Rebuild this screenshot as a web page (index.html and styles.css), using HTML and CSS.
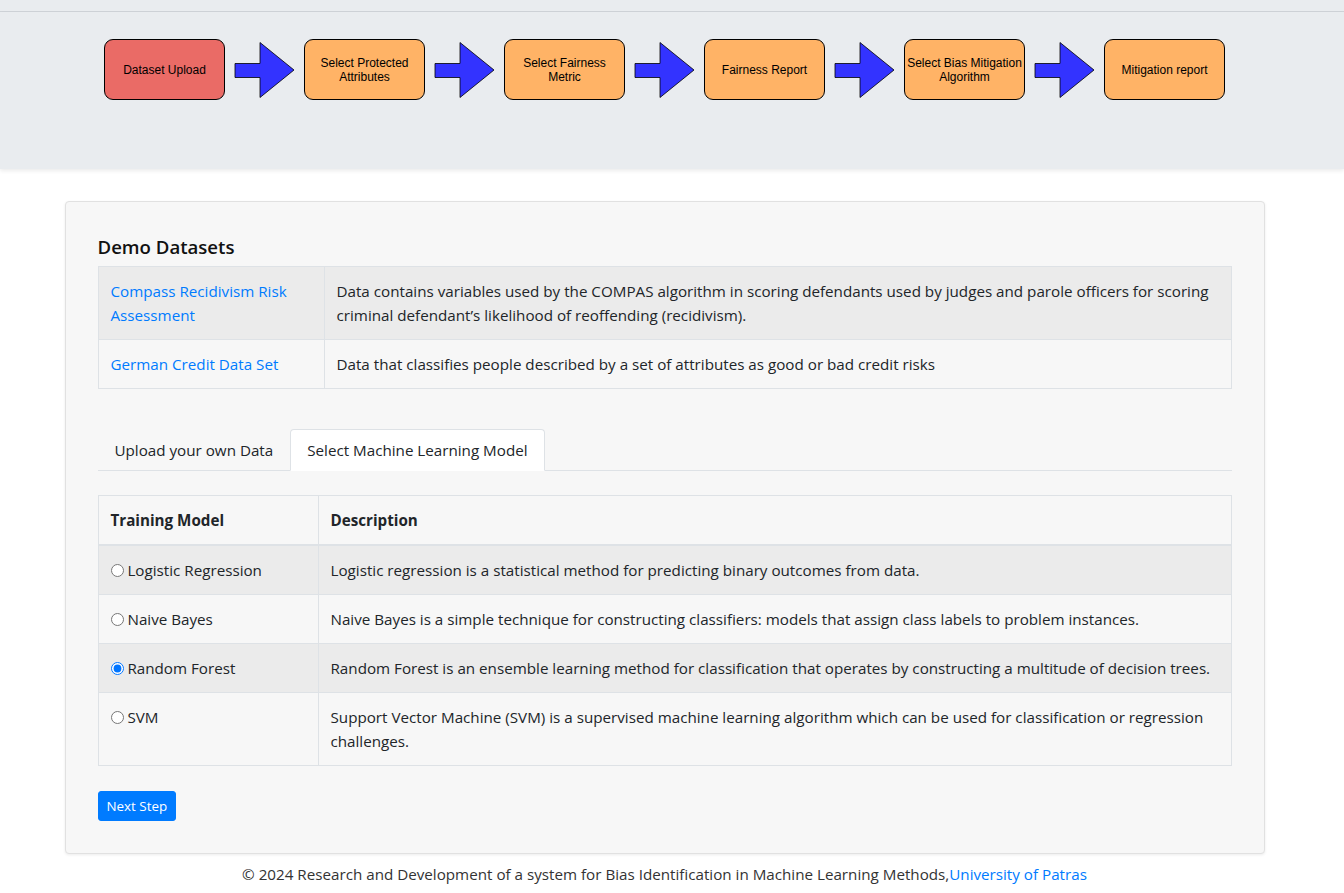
FILE: index.html
```html
<!DOCTYPE html>
<html lang="en">
<head>
<meta charset="utf-8">
<title>Bias Identification</title>
<link rel="stylesheet" href="styles.css">
</head>
<body>
<div class="topbar"></div>
<section class="flow-band">
  <div class="flow">
    <div class="step step-active">Dataset Upload</div>
    <svg class="arrow" width="62" height="58" viewBox="0 0 62 58"><path d="M1 22.5 H26 V1.5 L60 29 L26 56.5 V36.5 H1 Z"/></svg>
    <div class="step">Select Protected Attributes</div>
    <svg class="arrow" width="62" height="58" viewBox="0 0 62 58"><path d="M1 22.5 H26 V1.5 L60 29 L26 56.5 V36.5 H1 Z"/></svg>
    <div class="step">Select Fairness Metric</div>
    <svg class="arrow" width="62" height="58" viewBox="0 0 62 58"><path d="M1 22.5 H26 V1.5 L60 29 L26 56.5 V36.5 H1 Z"/></svg>
    <div class="step">Fairness Report</div>
    <svg class="arrow" width="62" height="58" viewBox="0 0 62 58"><path d="M1 22.5 H26 V1.5 L60 29 L26 56.5 V36.5 H1 Z"/></svg>
    <div class="step">Select Bias Mitigation Algorithm</div>
    <svg class="arrow" width="62" height="58" viewBox="0 0 62 58"><path d="M1 22.5 H26 V1.5 L60 29 L26 56.5 V36.5 H1 Z"/></svg>
    <div class="step">Mitigation report</div>
  </div>
</section>

<div class="page">
<main class="card">
  <h5 class="card-title">Demo Datasets</h5>
  <table class="tbl tbl-demo">
    <tr class="striped">
      <td class="c1"><a href="#">Compass Recidivism Risk Assessment</a></td>
      <td>Data contains variables used by the COMPAS algorithm in scoring defendants used by judges and parole officers for scoring criminal defendant’s likelihood of reoffending (recidivism).</td>
    </tr>
    <tr>
      <td class="c1"><a href="#">German Credit Data Set</a></td>
      <td>Data that classifies people described by a set of attributes as good or bad credit risks</td>
    </tr>
  </table>

  <ul class="tabs">
    <li class="tab">Upload your own Data</li>
    <li class="tab tab-active">Select Machine Learning Model</li>
  </ul>

  <table class="tbl tbl-models">
    <thead>
      <tr><th class="c1">Training Model</th><th>Description</th></tr>
    </thead>
    <tbody>
      <tr class="striped"><td class="c1"><label><input type="radio" name="m"> Logistic Regression</label></td><td>Logistic regression is a statistical method for predicting binary outcomes from data.</td></tr>
      <tr><td class="c1"><label><input type="radio" name="m"> Naive Bayes</label></td><td>Naive Bayes is a simple technique for constructing classifiers: models that assign class labels to problem instances.</td></tr>
      <tr class="striped"><td class="c1"><label><input type="radio" name="m" checked> Random Forest</label></td><td>Random Forest is an ensemble learning method for classification that operates by constructing a multitude of decision trees.</td></tr>
      <tr><td class="c1"><label><input type="radio" name="m"> SVM</label></td><td>Support Vector Machine (SVM) is a supervised machine learning algorithm which can be used for classification or regression challenges.</td></tr>
    </tbody>
  </table>

  <button class="btn">Next Step</button>
</main>

<footer class="footer">© 2024 Research and Development of a system for Bias Identification in Machine Learning Methods,<a href="#">University of Patras</a></footer>
</div>
</body>
</html>
```
FILE: styles.css
```css
* { box-sizing: border-box; }
html, body { margin: 0; padding: 0; }
body {
  font-family: "Open Sans", "Noto Sans", sans-serif;
  font-size: 15.2px;
  line-height: 24px;
  color: #212529;
  background: #fff;
}
a { color: #007bff; text-decoration: none; }

.topbar {
  height: 12px;
  background: #e9ecef;
  border-bottom: 1px solid #cfd3d8;
}
.flow-band {
  height: 157px;
  background: #e9ecef;
  padding-top: 27px;
  box-shadow: 0 2px 4px rgba(0,0,0,0.08);
  position: relative;
}
.flow {
  display: flex;
  align-items: center;
  padding-left: 104px;
}
.step {
  width: 121px;
  height: 61px;
  border: 1px solid #000;
  border-radius: 9px;
  background: #ffb366;
  display: flex;
  align-items: center;
  justify-content: center;
  text-align: center;
  font-family: "Liberation Sans", Arial, sans-serif;
  font-size: 12px;
  line-height: 14px;
  color: #000;
  padding: 0 1px;
}
.step-active { background: #ea6b66; }
.arrow {
  margin-left: 9px;
  margin-right: 8px;
  display: block;
}
.arrow path { fill: #3333ff; stroke: #000; stroke-width: 0.8; }

.page {
  width: 1329px;
}
.card {
  display: block;
  width: 1200px;
  margin: 32px auto 0;
  background: #f7f7f7;
  border: 1px solid #e1e1e1;
  border-radius: 4px;
  box-shadow: 0 1px 3px rgba(0,0,0,0.08);
  padding: 32px;
}
.card-title {
  margin: 0 0 8px;
  font-size: 18.6px;
  line-height: 24px;
  font-weight: 600;
  color: #111;
  position: relative;
  top: 1px;
}
.tbl {
  width: 100%;
  border-collapse: collapse;
  border: 1px solid #dee2e6;
}
.tbl td, .tbl th {
  border: 1px solid #dee2e6;
  padding: 12px;
  vertical-align: top;
  text-align: left;
}
.tbl .striped td { background: #ebebeb; }
.tbl-demo .c1 { width: 226px; }
.tbl-models .c1 { width: 220px; }
.tbl-models th { border-bottom: 2px solid #dee2e6; font-weight: 700; }
.tbl-models input { margin: 0; width: 13px; height: 13px; vertical-align: -1px; }

.tabs {
  list-style: none;
  margin: 40px 0 24px;
  padding: 0;
  display: flex;
  border-bottom: 1px solid #dee2e6;
}
.tab {
  padding: 8px 16px;
  margin-bottom: -1px;
  border: 1px solid transparent;
  border-top-left-radius: 4px;
  border-top-right-radius: 4px;
  line-height: 24px;
}
.tab-active {
  background: #fff;
  border-color: #dee2e6 #dee2e6 #fff;
  color: #212529;
}

.btn {
  display: block;
  margin-top: 25px;
  font-family: inherit;
  font-size: 13.4px;
  line-height: 20px;
  padding: 4px 8px;
  border: 1px solid #007bff;
  background: #007bff;
  color: #fff;
  border-radius: 3px;
}
.footer {
  text-align: center;
  color: #333;
  padding: 8px 0 10px;
}
```
